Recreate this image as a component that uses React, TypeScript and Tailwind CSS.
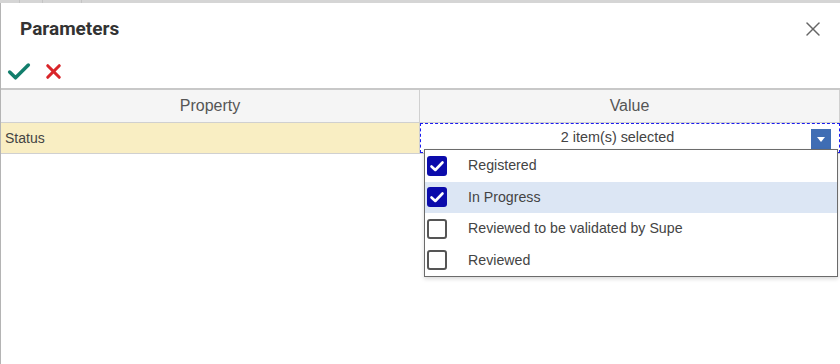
import { Check, X } from 'lucide-react';

type StatusOption = {
  label: string;
  checked: boolean;
  highlighted?: boolean;
};

const statusOptions: StatusOption[] = [
  { label: 'Registered', checked: true },
  { label: 'In Progress', checked: true, highlighted: true },
  { label: 'Reviewed to be validated by Supe', checked: false },
  { label: 'Reviewed', checked: false },
];

function OptionBox({ checked }: { checked: boolean }) {
  if (checked) {
    return (
      <span className="flex h-[20px] w-[20px] items-center justify-center rounded-[3px] bg-[#0b0bab]">
        <svg viewBox="0 0 20 20" className="h-[20px] w-[20px]" aria-hidden>
          <path d="M4.5 10.5 L8.3 14 L15.5 6.5" fill="none" stroke="white" strokeWidth="2.6" strokeLinecap="round" strokeLinejoin="round" />
        </svg>
      </span>
    );
  }
  return <span className="h-[20px] w-[20px] rounded-[3px] border-2 border-[#555]" />;
}

function StatusDropdown() {
  return (
    <div className="absolute left-[424px] top-[149px] w-[414px] border border-[#6b6b6b] bg-white shadow-[0_2px_4px_rgba(0,0,0,0.15)]">
      {statusOptions.map((option) => (
        <div
          key={option.label}
          className={`flex h-[31.5px] items-center pl-[2px] ${option.highlighted ? 'bg-[#dce6f4]' : ''}`}
        >
          <OptionBox checked={option.checked} />
          <span className="ml-[21px] text-[14.2px] text-[#444]">{option.label}</span>
        </div>
      ))}
    </div>
  );
}

export default function App() {
  return (
    <div className="relative h-[364px] w-[840px] overflow-hidden bg-white font-['Liberation_Sans',Arial,sans-serif]">
      <div className="flex h-[3px] bg-[#d5d5d5]">
        <div className="w-[20px] border-r border-[#c4c4c4]" />
        <div className="w-[23px] border-r border-[#c4c4c4]" />
        <div className="w-[39px] border-r border-[#c4c4c4]" />
      </div>
      <div className="flex h-[361px] flex-col border-l border-[#b4b4b4]">
        <div className="flex h-[52px] items-center justify-between pl-[19px] pr-[15px]">
          <h1 className="font-['Roboto',sans-serif] text-[19px] font-bold text-[#333]">Parameters</h1>
          <X className="h-[24px] w-[24px] text-[#666]" strokeWidth={1.5} aria-hidden />
        </div>
        <div className="flex h-[33px] items-center gap-[9px] pl-[4px]">
          <Check className="h-[28px] w-[28px] text-[#127e6c]" strokeWidth={3} aria-hidden />
          <X className="h-[23px] w-[23px] text-[#d9252a]" strokeWidth={3.2} aria-hidden />
        </div>
        <div className="w-[839px] border-t-2 border-[#c8c8c8] text-[14px] text-[#444]">
          <div className="grid h-[33px] grid-cols-[419px_1fr] border-b border-[#d0d0d0] bg-[#f5f5f5] text-[16px] text-[#555]">
            <div className="flex items-center justify-center border-r border-[#d0d0d0]">Property</div>
            <div className="flex items-center justify-center border-r border-[#d0d0d0]">Value</div>
          </div>
          <div className="grid h-[31px] grid-cols-[419px_1fr] border-b border-[#d0d0d0]">
            <div className="flex items-center border-r border-[#d0d0d0] bg-[#f9eec3] pl-[4px]">Status</div>
            <div className="relative flex items-center justify-center border border-dashed border-[#1c1cf0]">
              <span className="pr-[25px] text-[14.4px]">2 item(s) selected</span>
              <span className="absolute right-[8px] top-[5px] flex h-[20px] w-[20px] items-center justify-center bg-[#3f6db4]">
                <svg viewBox="0 0 8 5" className="h-[5px] w-[8px]" aria-hidden>
                  <path d="M0 0 H8 L4 5 Z" fill="white" />
                </svg>
              </span>
            </div>
          </div>
        </div>
      </div>
      <StatusDropdown />
    </div>
  );
}
